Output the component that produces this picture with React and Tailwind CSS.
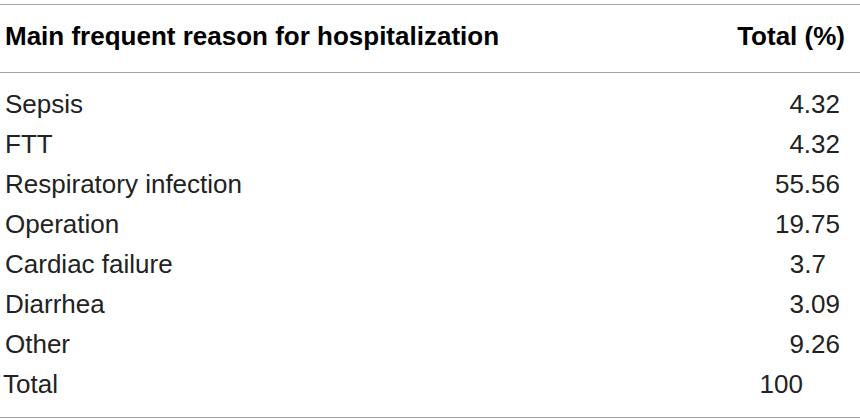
import React from 'react';

const rows = [
    { label: 'Sepsis', value: '4.32', pad: 'pr-[20px]' },
    { label: 'FTT', value: '4.32', pad: 'pr-[20px]' },
    { label: 'Respiratory infection', value: '55.56', pad: 'pr-[20px]' },
    { label: 'Operation', value: '19.75', pad: 'pr-[20px]' },
    { label: 'Cardiac failure', value: '3.7', pad: 'pr-[34px]' },
    { label: 'Diarrhea', value: '3.09', pad: 'pr-[20px]' },
    { label: 'Other', value: '9.26', pad: 'pr-[20px]' },
];

export default function App() {
    return (
        <div className="w-[860px] h-[420px] bg-white pt-[4px] font-['Liberation_Sans',Arial,sans-serif]">
            <div className="border-t border-b border-[#a3a3a3]">
                {/* header */}
                <div className="flex justify-between items-start pt-[16px] pb-[21px] pl-[5px] pr-[15px] border-b border-[#a3a3a3] text-[26px] leading-[30px] font-bold text-black">
                    <span>Main frequent reason for hospitalization</span>
                    <span>Total (%)</span>
                </div>

                {/* body */}
                <div className="pt-[11px] pb-[13px] text-[26px] leading-[40px] text-[#222]">
                    {rows.map((r) => (
                        <div key={r.label} className="flex justify-between pl-[5px]">
                            <span>{r.label}</span>
                            <span className={r.pad}>{r.value}</span>
                        </div>
                    ))}
                    <div className="flex justify-between pl-[3px]">
                        <span>Total</span>
                        <span className="pr-[57px]">100</span>
                    </div>
                </div>
            </div>
        </div>
    );
}
